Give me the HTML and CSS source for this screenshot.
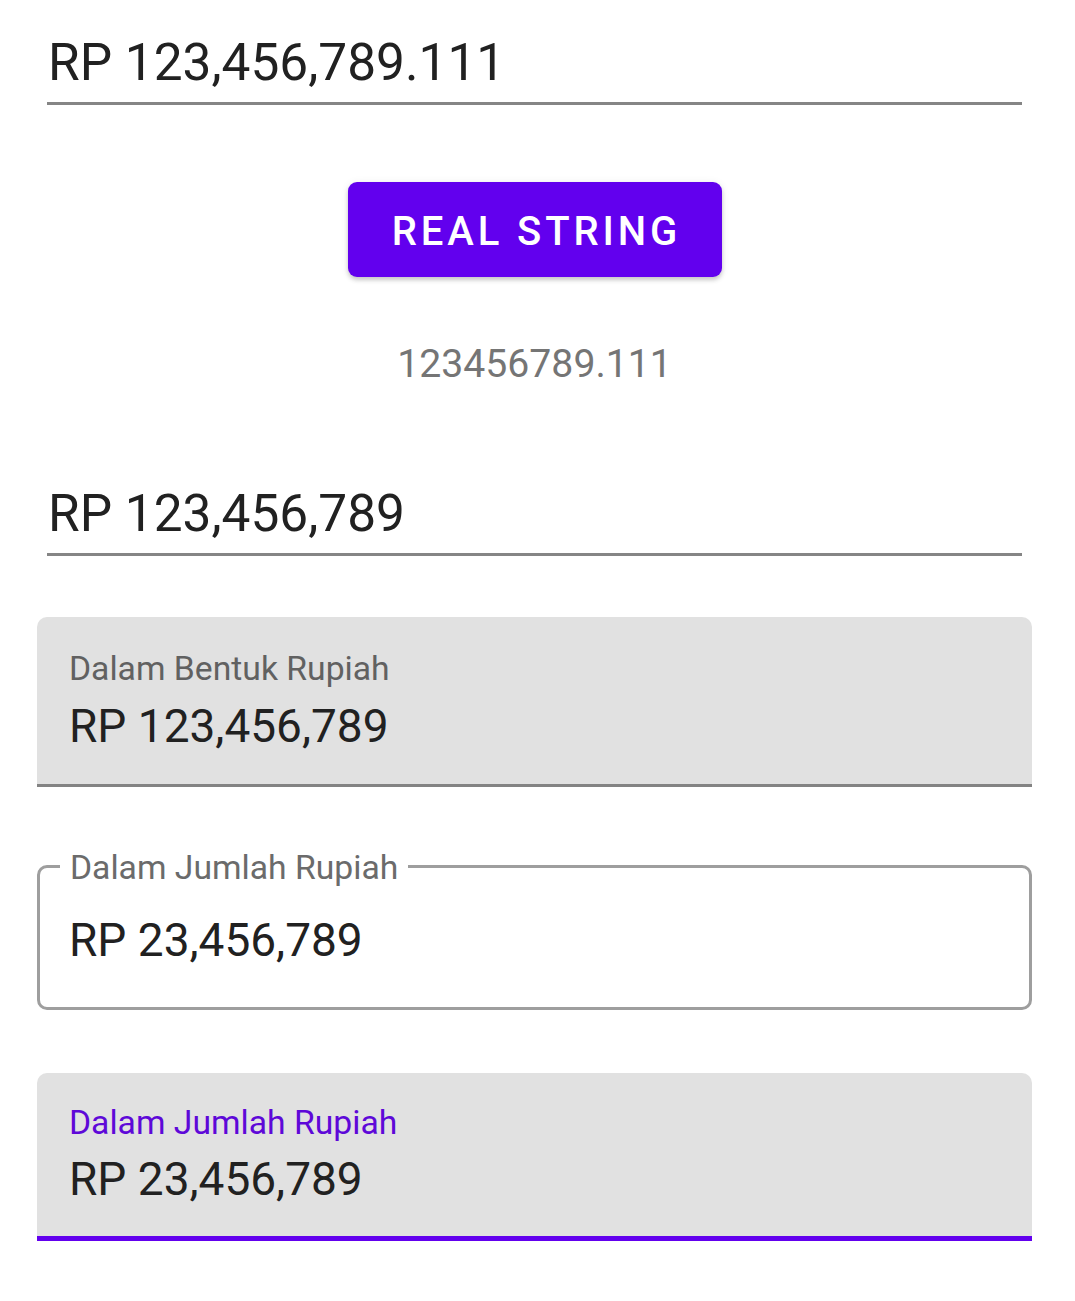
FILE: index.html
```html
<!DOCTYPE html>
<html lang="id">
<head>
<meta charset="utf-8">
<title>Rupiah</title>
<link rel="stylesheet" href="styles.css">
</head>
<body>
<main class="page">
  <div class="line-input line-input--first">RP 123,456,789.111</div>

  <div class="button-row">
    <button class="btn" type="button">REAL STRING</button>
  </div>

  <p class="result">123456789.111</p>

  <div class="line-input line-input--second">RP 123,456,789</div>

  <div class="filled filled--first">
    <div class="filled__label">Dalam Bentuk Rupiah</div>
    <div class="filled__value">RP 123,456,789</div>
  </div>

  <div class="outlined">
    <span class="outlined__label">Dalam Jumlah Rupiah</span>
    <div class="outlined__value">RP 23,456,789</div>
  </div>

  <div class="filled filled--focused">
    <div class="filled__label">Dalam Jumlah Rupiah</div>
    <div class="filled__value">RP 23,456,789</div>
  </div>
</main>
</body>
</html>
```

FILE: styles.css
```css
* { box-sizing: border-box; }

html, body {
  margin: 0;
  padding: 0;
  background: #ffffff;
}

body {
  font-family: Roboto, "Noto Sans", "Liberation Sans", sans-serif;
  color: #212121;
}

.page {
  display: flex;
  flex-direction: column;
  padding: 0 53px 0 47px;
  width: 1075px;
}

/* plain underline inputs */
.line-input {
  font-size: 51.4px;
  line-height: 52px;
  padding: 0 0 13px 1px;
  border-bottom: 3px solid #858585;
  color: #212121;
}
.line-input--first { margin-top: 37px; }
.line-input--second { margin-top: 104px; }

/* button */
.button-row {
  display: flex;
  justify-content: center;
  margin-top: 77px;
}
.btn {
  width: 374px;
  height: 95px;
  border: none;
  border-radius: 9px;
  background: #6200ee;
  color: #ffffff;
  font-family: Roboto, "Noto Sans", sans-serif;
  font-weight: 500;
  font-size: 40px;
  letter-spacing: 3.9px;
  padding: 4px 0 0 4px;
  display: flex;
  align-items: center;
  justify-content: center;
  box-shadow: 0 3px 4px rgba(0, 0, 0, 0.18), 0 1px 8px rgba(0, 0, 0, 0.08);
}

.result {
  margin: 67px 0 0;
  text-align: center;
  font-size: 39.2px;
  line-height: 40px;
  color: #757575;
}

/* filled text fields */
.filled {
  margin: 0 -10px;
  background: #e1e1e1;
  border-radius: 10px 10px 0 0;
  padding: 35px 33px 35px 32px;
  border-bottom: 3px solid #838383;
  display: flex;
  flex-direction: column;
  gap: 16px;
}
.filled--first { margin-top: 61px; }
.filled--focused {
  margin-top: 63px;
  padding: 33px 33px 34px 32px;
  gap: 16px;
  border-bottom: 5px solid #6200ee;
}
.filled__label {
  font-size: 33.7px;
  line-height: 34.65px;
  color: #616161;
}
.filled--focused .filled__label { color: #5e08d8; }
.filled__value {
  font-size: 46px;
  line-height: 46px;
  color: #212121;
}

/* outlined text field */
.outlined {
  position: relative;
  margin: 78px -10px 0;
  height: 145px;
  border: 3px solid #9e9e9e;
  border-radius: 10px;
  padding: 49px 30px 0 29px;
}
.outlined__label {
  position: absolute;
  top: -17px;
  left: 20px;
  padding: 0 10px;
  background: #ffffff;
  font-size: 33.7px;
  line-height: 34.65px;
  color: #6b6b6b;
}
.outlined__value {
  font-size: 46px;
  line-height: 46px;
  color: #212121;
}
```
